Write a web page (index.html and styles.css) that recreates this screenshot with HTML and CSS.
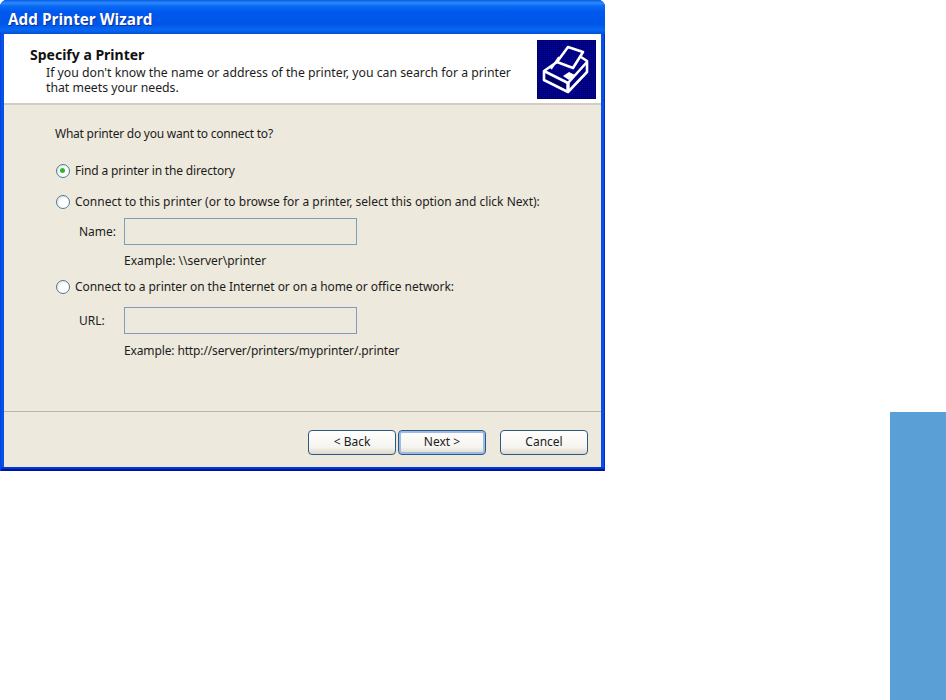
FILE: index.html
```html
<!DOCTYPE html>
<html lang="en">
<head>
<meta charset="utf-8">
<title>Add Printer Wizard</title>
<link rel="stylesheet" href="styles.css">
</head>
<body>
<div class="window">
  <div class="titlebar">Add Printer Wizard</div>
  <div class="client">
    <header class="head">
      <div class="head-text">
        <div class="head-title">Specify a Printer</div>
        <div class="head-sub">If you don't know the name or address of the printer, you can search for a printer<br>that meets your needs.</div>
      </div>
      <svg class="printer" width="59" height="59" viewBox="0 0 59 59">
        <defs>
          <pattern id="dots" width="2" height="2" patternUnits="userSpaceOnUse">
            <rect width="2" height="2" fill="#0000a0"/>
            <rect width="1" height="1" fill="#000030"/>
          </pattern>
        </defs>
        <rect width="59" height="59" fill="url(#dots)"/>
        <g fill="none" stroke="#fff" stroke-linejoin="round">
          <path d="M31 7 L46 12 L36 28 L20 22 Z" stroke-width="2.6"/>
          <path d="M20 22 L7 31 L7 40 L31 52 L50 32 L50 21 L44 17" stroke-width="2.6"/>
          <path d="M7 31 L31 43 L50 22" stroke-width="2.6"/>
          <path d="M31 43 L31 52" stroke-width="3.4"/>
          <path d="M14 29 L22 17" stroke-width="2"/>
        </g>
        <path d="M26 36 L32 32 L38 35 L32 40 Z" fill="#fff"/>
        <path d="M9 35 L29 45 L29 49 L9 39 Z" fill="#00005a"/>
      </svg>
    </header>
    <main class="body">
      <p class="question">What printer do you want to connect to?</p>
      <label class="option opt-find"><span class="radio checked"></span>Find a printer in the directory</label>
      <label class="option opt-connect"><span class="radio"></span>Connect to this printer (or to browse for a printer, select this option and click Next):</label>
      <div class="field field-name"><span class="field-label">Name:</span><span class="input"></span></div>
      <div class="example ex-name">Example: \\server\printer</div>
      <label class="option opt-net"><span class="radio"></span>Connect to a printer on the Internet or on a home or office network:</label>
      <div class="field field-url"><span class="field-label">URL:</span><span class="input"></span></div>
      <div class="example ex-url">Example: http://server/printers/myprinter/.printer</div>
    </main>
    <footer class="foot">
      <button class="btn" type="button">&lt; Back</button>
      <button class="btn default" type="button">Next &gt;</button>
      <button class="btn cancel" type="button">Cancel</button>
    </footer>
  </div>
</div>
<div class="block"></div>
</body>
</html>
```
FILE: styles.css
```css
html, body { margin: 0; padding: 0; }
body {
  width: 946px;
  height: 700px;
  background: #fff;
  display: flex;
  justify-content: space-between;
  align-items: flex-start;
  overflow: hidden;
  font-family: "Noto Sans", sans-serif;
  font-size: 12px;
  color: #1c1c1c;
}
.window {
  width: 605px;
  height: 471px;
  box-sizing: border-box;
  display: flex;
  flex-direction: column;
  border-radius: 7px 7px 0 0;
  background: #0a50e8;
  padding: 0 4px 4px 4px;
  box-shadow: inset -1px 0 0 #0030c0, inset 1px 0 0 #0048e0, inset 0 -2px 0 #00149c, inset 0 -4px 0 #0038d8;
}
.titlebar {
  height: 34px;
  margin: 0 -4px;
  padding: 0 0 0 8px;
  border-radius: 7px 7px 0 0;
  line-height: 38px;
  box-sizing: border-box;
  font-family: "Open Sans", sans-serif;
  font-weight: 700;
  font-size: 15.3px;
  color: #fff;
  text-shadow: 1px 1px 0 #0a2f9c;
  background: linear-gradient(180deg, #0a5ae0 0, #2b8cff 3px, #0a6bf5 6px, #0058ee 12px, #0055e6 24px, #0668f5 30px, #0050d8 34px);
}
.client {
  flex: 1;
  display: flex;
  flex-direction: column;
  background: #ede9dd;
  min-height: 0;
}
.head {
  height: 71px;
  flex: none;
  box-sizing: border-box;
  background: #fff;
  border-bottom: 2px solid #d0cdc2;
  display: flex;
  justify-content: space-between;
  padding: 6px 5px 0 26px;
}
.head-title { font-weight: 700; font-size: 14px; margin-top: 7px; line-height: 16px; color: #111; }
.head-sub { margin: 2px 0 0 16px; line-height: 15px; font-size: 12.25px; }
.printer { display: block; flex: none; }
.body { flex: 1; padding-left: 51px; min-height: 0; border-bottom: 1px solid #b9b6a8; }
.question { margin: 22px 0 0; line-height: 14px; letter-spacing: -0.23px; }
.option { display: flex; align-items: center; gap: 5px; line-height: 14px; margin-left: 1px; height: 14px; }
.radio {
  width: 14px;
  height: 14px;
  box-sizing: border-box;
  flex: none;
  border: 1.5px solid #4a7c9e;
  border-radius: 50%;
  background: radial-gradient(circle at 60% 60%, #fff 40%, #d4d4cc 100%);
  position: relative;
}
.radio.checked::after {
  content: "";
  position: absolute;
  left: 3px;
  top: 3px;
  width: 5px;
  height: 5px;
  border-radius: 50%;
  background: #2fb52f;
}
.opt-find { margin-top: 23px; letter-spacing: -0.16px; }
.opt-connect { margin-top: 17px; }
.field { display: flex; align-items: center; }
.field-name { margin-top: 9px; }
.field-url { margin-top: 13px; }
.field-label { width: 46px; margin-left: 24px; box-sizing: border-box; flex: none; }
.input {
  width: 233px;
  height: 27px;
  box-sizing: border-box;
  border: 1px solid #7f9db9;
  background: #ede9dd;
  display: block;
  flex: none;
  margin-left: -1px;
}
.example { margin-left: 69px; line-height: 14px; }
.ex-name { margin-top: 9px; }
.ex-url { margin-top: 10px; letter-spacing: -0.13px; }
.opt-net { margin-top: 12px; letter-spacing: -0.06px; }
.foot {
  height: 55px;
  flex: none;
  box-sizing: border-box;
  display: flex;
  padding: 18px 13px 0 304px;
}
.btn {
  width: 88px;
  height: 25px;
  padding: 0 0 2px;
  margin: 0 2px 0 0;
  box-sizing: border-box;
  font: inherit;
  color: #1c1c1c;
  border: 1px solid #2a5a80;
  border-radius: 4px;
  background: linear-gradient(180deg, #fff 0, #f6f4ee 70%, #dcd8cc 100%);
}
.btn.default { box-shadow: inset 0 0 0 2px #9dbbe8; }
.btn.cancel { margin: 0 0 0 12px; }
.block { width: 56px; height: 288px; align-self: flex-end; background: #5a9fd6; flex: none; }
```
